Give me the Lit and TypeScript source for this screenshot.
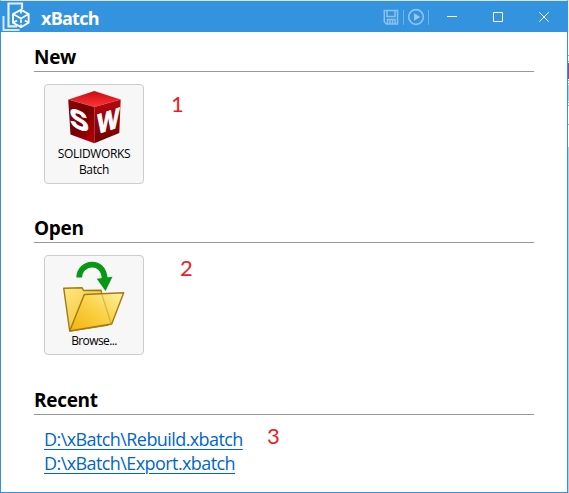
import { LitElement, html, css } from "lit";
import { customElement } from "lit/decorators.js";

@customElement("app-root")
export class AppRoot extends LitElement {
  static styles = css`
    :host { display: block; position: relative; width: 569px; height: 493px; overflow: hidden; background: #fff; font-family: "Open Sans", "Noto Sans", sans-serif; color: #000; }
    * { box-sizing: border-box; }
    svg { display: block; }
    .window { display: flex; flex-direction: column; width: 568px; height: 493px; border: 1px solid #3393df; border-top-color: #dfe3e6; }
    .bar { display: flex; align-items: center; height: 31px; flex: none; margin: 0 -2px 0 -1px; background: #3393df; color: #fff; }
    .logo { width: 34px; height: 31px; flex: none; }
    .title { font-size: 18px; font-weight: 700; line-height: 30px; margin-left: 7px; padding-top: 2px; letter-spacing: -0.75px; flex: 1; }
    .tools { width: 199px; height: 31px; flex: none; }
    .body { padding: 12px 33px 0; display: flex; flex-direction: column; }
    h2 { margin: 0; height: 28px; line-height: 26px; border-bottom: 1px solid #999; font-size: 19px; font-weight: 700; letter-spacing: -0.3px; }
    section { height: 171px; }
    section.last { margin-top: 1px; }
    .card { display: flex; flex-direction: column; align-items: center; width: 100px; height: 100px; margin: 12px 0 0 10px; border: 1px solid #ccc; border-radius: 4px; background: #f7f7f7; font-size: 12px; line-height: 16px; text-align: center; }
    .card svg { width: 98px; height: 61px; flex: none; }
    .card.open svg { height: 77px; }
    .sw { letter-spacing: -0.35px; }
    .tight { letter-spacing: -0.6px; }
    .links { display: flex; flex-direction: column; align-items: flex-start; padding: 12px 0 0 10px; }
    a { color: #0066cc; font-size: 18px; line-height: 24px; height: 24px; letter-spacing: -0.58px; text-decoration: underline; text-decoration-thickness: 1px; text-underline-offset: 3px; }
    .note { position: absolute; color: #ed1c24; font-family: Lato, sans-serif; font-size: 22px; line-height: 24px; }
    .n1 { left: 171px; top: 92px; }
    .n2 { left: 180px; top: 256px; }
    .n3 { left: 267px; top: 424px; }
    .strip { position: absolute; right: 0; top: 0; width: 1px; height: 493px; }
  `;

  render() {
    return html`
      <div class="window">
        <div class="bar">
          <svg class="logo" viewBox="0 1 34 31" fill="none" stroke="#fff">
            <path d="M3.5 16V30H19.5" stroke-width="2" opacity=".8"/>
            <path d="M22 9V3.5H8.5V26.3H17" stroke-width="2.2" opacity=".85"/>
            <path d="M21 9.8L28.6 14V22.8L21 27.2L13 22.8V14Z" fill="#3393df" stroke-width="1.9"/>
            <path d="M13 14L17 16.2M28.6 14L24.8 16.2M21 10V13.5M17 16.2L21 18.5L24.8 16.2M21 18.5V23M21 24.5V27M13 22.8L17 20.5M28.6 22.8L24.8 20.5" stroke-width="1.6"/>
          </svg>
          <span class="title">xBatch</span>
          <svg class="tools" viewBox="370 1 199 31" fill="none">
            <g stroke="#8dc1ec" stroke-width="1.5">
              <path d="M384.3 10.5H397.5V24H386.5L384.3 21.8Z"/>
              <path d="M387 11V16.5H395V11M387.5 24V19.5H395V24M390 20V24M392.5 20V24"/>
              <circle cx="416" cy="17" r="7.3" stroke-width="1.7"/>
            </g>
            <path d="M414 13.3L420.3 17L414 20.7Z" fill="#9bc9ee"/>
            <path d="M403.5 10V25M428.5 10V25" stroke="#6fb1e7"/>
            <path d="M447 16.5H457M493.5 12.5H502.5V21.5H493.5ZM539.3 12.3L548.7 21.7M548.7 12.3L539.3 21.7" stroke="#fff" stroke-width="1"/>
          </svg>
        </div>
        <div class="body">
          <section>
            <h2>New</h2>
            <div class="card">
              <svg viewBox="45 85 98 61">
                <defs>
                  <linearGradient id="top" x1="0" y1="0" x2="0" y2="1"><stop offset="0" stop-color="#c90b12"/><stop offset="1" stop-color="#ff3436"/></linearGradient>
                  <linearGradient id="left" x1="0" y1="0" x2="1" y2="1"><stop offset="0" stop-color="#8c0508"/><stop offset=".5" stop-color="#740003"/><stop offset="1" stop-color="#bd0006"/></linearGradient>
                  <linearGradient id="right" x1="0" y1="0" x2="0" y2="1"><stop offset="0" stop-color="#b8090e"/><stop offset="1" stop-color="#6e0003"/></linearGradient>
                </defs>
                <path d="M68.5 99.5L94.3 91L120.5 99.5L94.3 107Z" fill="url(#top)"/>
                <path d="M68.2 99.5L94.3 107V143.3L70.5 134.5Z" fill="url(#left)"/>
                <path d="M94.3 107L120.7 99.5L119.3 133L94.3 143.3Z" fill="url(#right)"/>
                <g fill="#fff" stroke="#fff" stroke-width="1" font-family="Liberation Sans" font-weight="700">
                  <text transform="matrix(1.02 .36 .12 1 71 126)" font-size="27">S</text>
                  <text transform="matrix(.88 -.28 -.03 1 97 134)" font-size="28" textLength="25" lengthAdjust="spacingAndGlyphs">W</text>
                </g>
              </svg>
              <span class="sw">SOLIDWORKS</span><span class="sw">Batch</span>
            </div>
          </section>
          <section>
            <h2>Open</h2>
            <div class="card open">
              <svg viewBox="45 256 98 77">
                <defs>
                  <linearGradient id="back" x1="0" y1="0" x2="1" y2="1"><stop offset="0" stop-color="#ffe982"/><stop offset="1" stop-color="#edb418"/></linearGradient>
                  <linearGradient id="front" x1="1" y1="0" x2="0" y2="1"><stop offset="0" stop-color="#fff2a2"/><stop offset=".45" stop-color="#fbd44a"/><stop offset="1" stop-color="#f3b30e"/></linearGradient>
                </defs>
                <g stroke="#a17b12" stroke-width="1.4" stroke-linejoin="round">
                  <path d="M63.7 288.2L82 287.7L83.5 290.5L101 290.2L108 325L69.7 331Z" fill="url(#back)"/>
                  <path d="M84.3 294.5L123.7 292.7L111.7 324L69.7 331Z" fill="url(#front)"/>
                  <path d="M102 295L111 323" opacity=".35"/>
                </g>
                <path d="M79.2 277.5C79.5 261.5 104 258.5 104.7 279" fill="none" stroke="#079915" stroke-width="5.8"/>
                <path d="M96.7 278.8L112.5 276.7L105.5 291Z" fill="#079915"/>
              </svg>
              <span class="tight">Browse...</span>
            </div>
          </section>
          <section class="last">
            <h2>Recent</h2>
            <div class="links"><a>D:\\xBatch\\Rebuild.xbatch</a><a>D:\\xBatch\\Export.xbatch</a></div>
          </section>
        </div>
      </div>
      <span class="note n1">1</span><span class="note n2">2</span><span class="note n3">3</span>
      <svg class="strip" viewBox="0 0 1 493">
        <path d="M0 32H1V493H0Z" fill="#fff"/>
        <path d="M0 0H1V2H0Z" fill="#dfe3e6"/>
        <path d="M0 2H1V32H0Z" fill="#e3effa"/>
        <path d="M0 63H1V79H0Z" fill="#8c4a9e"/>
        <path d="M0 85H1V101H0ZM0 147H1V493H0Z" fill="#b5cde6"/>
        <path d="M0 55H1V56H0ZM0 61H1V62H0ZM0 80H1V81H0ZM0 83H1V84H0ZM0 102H1V103H0ZM0 105H1V106H0ZM0 124H1V125H0Z" fill="#7db4e0"/>
      </svg>
    `;
  }
}
